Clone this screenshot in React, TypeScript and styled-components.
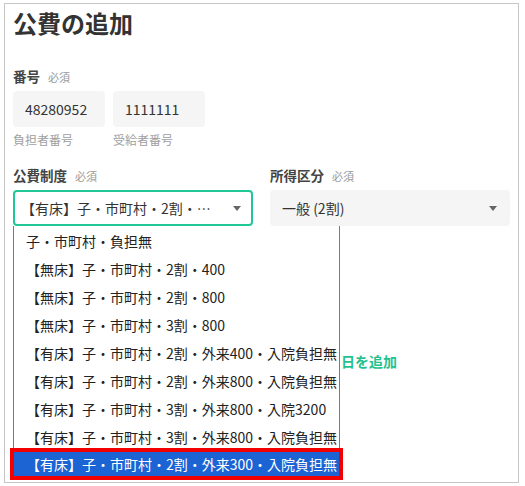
import React from 'react';
import styled, { createGlobalStyle } from 'styled-components';

const GlobalStyle = createGlobalStyle`
  body {
    margin: 0;
    font-family: "Noto Sans CJK JP", "Noto Sans", sans-serif;
    color: #333;
    background: #fff;
  }
`;

const Page = styled.div`
  padding: 3px 0 0 4px;
`;

const Panel = styled.div`
  width: 515px;
  height: 480px;
  box-sizing: border-box;
  border: 1px solid #c6c6c6;
  padding: 0 8px;
`;

const Title = styled.h1`
  margin: 2px 0 0;
  font-size: 24px;
  line-height: 34px;
  font-weight: 700;
  color: #333;
`;

const Label = styled.div<{ $top: number }>`
  margin-top: ${(p) => p.$top}px;
  display: flex;
  align-items: baseline;
  font-size: 13.5px;
  line-height: 20px;
  font-weight: 700;
  color: #444;
`;

const Required = styled.span`
  margin-left: 8px;
  font-size: 11px;
  font-weight: 400;
  color: #999;
`;

const NumberRow = styled.div`
  display: flex;
  gap: 8px;
  margin-top: 4px;
`;

const NumberField = styled.div`
  display: flex;
  flex-direction: column;
`;

const NumberInput = styled.input`
  width: 92px;
  height: 36px;
  box-sizing: border-box;
  padding: 0 12px;
  border: none;
  border-radius: 4px;
  background: #f5f5f5;
  font: inherit;
  font-size: 14px;
  color: #333;
  outline: none;
`;

const Helper = styled.div`
  margin-top: 5px;
  font-size: 12px;
  line-height: 16px;
  color: #9e9e9e;
`;

const Grid = styled.div`
  display: grid;
  grid-template-columns: 240px 240px;
  column-gap: 17px;
`;

const Field = styled.div`
  position: relative;
`;

const SelectBox = styled.div<{ $active?: boolean }>`
  margin-top: 4px;
  height: 36px;
  box-sizing: border-box;
  display: flex;
  align-items: center;
  gap: 18px;
  padding: ${(p) => (p.$active ? '0 10px 0 6px' : '0 13px 0 12px')};
  border: ${(p) => (p.$active ? '2px solid #1fc896' : 'none')};
  border-radius: 4px;
  background: ${(p) => (p.$active ? '#fff' : '#f5f5f5')};
  font-size: 14px;
  color: #333;
`;

const SelectValue = styled.span`
  flex: 1;
  min-width: 0;
  white-space: nowrap;
  overflow: hidden;
  text-overflow: ellipsis;
`;

const Caret = styled.span`
  width: 0;
  height: 0;
  border-left: 4.5px solid transparent;
  border-right: 4.5px solid transparent;
  border-top: 5px solid #666;
  flex-shrink: 0;
`;

const OptionList = styled.ul`
  position: absolute;
  top: 100%;
  left: 0;
  z-index: 10;
  width: max-content;
  margin: 0;
  padding: 1px 0 2px;
  list-style: none;
  background: #fff;
  border: 1px solid #7a7a7a;
  border-top: none;
`;

const OptionItem = styled.li<{ $selected?: boolean }>`
  height: ${(p) => (p.$selected ? '24px' : '28px')};
  margin-top: ${(p) => (p.$selected ? '1px' : '0')};
  padding: 0 2px 0 12px;
  font-size: 14px;
  line-height: ${(p) => (p.$selected ? '25px' : '28px')};
  white-space: nowrap;
  color: ${(p) => (p.$selected ? '#fff' : '#222')};
  background: ${(p) => (p.$selected ? '#1c63d3' : 'transparent')};
  outline: ${(p) => (p.$selected ? '4px solid #f20000' : 'none')};
`;

const AddLink = styled.button`
  grid-column: 2;
  justify-self: start;
  margin-top: 125px;
  display: flex;
  align-items: center;
  gap: 3px;
  padding: 0;
  border: none;
  background: none;
  font: inherit;
  font-size: 14px;
  line-height: 20px;
  font-weight: 700;
  color: #1fc28f;
  cursor: pointer;
`;

const options = [
  '子・市町村・負担無',
  '【無床】子・市町村・2割・400',
  '【無床】子・市町村・2割・800',
  '【無床】子・市町村・3割・800',
  '【有床】子・市町村・2割・外来400・入院負担無',
  '【有床】子・市町村・2割・外来800・入院負担無',
  '【有床】子・市町村・3割・外来800・入院3200',
  '【有床】子・市町村・3割・外来800・入院負担無',
  '【有床】子・市町村・2割・外来300・入院負担無',
];

const selectedIndex = 8;

export default function App() {
  return (
    <Page>
      <GlobalStyle />
      <Panel>
        <Title>公費の追加</Title>

        <Label $top={26}>
          番号<Required>必須</Required>
        </Label>
        <NumberRow>
          <NumberField>
            <NumberInput readOnly value="48280952" />
            <Helper>負担者番号</Helper>
          </NumberField>
          <NumberField>
            <NumberInput readOnly value="1111111" />
            <Helper>受給者番号</Helper>
          </NumberField>
        </NumberRow>

        <Grid>
          <Field>
            <Label $top={17}>
              公費制度<Required>必須</Required>
            </Label>
            <SelectBox $active>
              <SelectValue>{options[selectedIndex]}</SelectValue>
              <Caret />
            </SelectBox>
            <OptionList>
              {options.map((o, i) => (
                <OptionItem key={o} $selected={i === selectedIndex}>
                  {o}
                </OptionItem>
              ))}
            </OptionList>
          </Field>
          <Field>
            <Label $top={17}>
              所得区分<Required>必須</Required>
            </Label>
            <SelectBox>
              <SelectValue>一般 (2割)</SelectValue>
              <Caret />
            </SelectBox>
          </Field>
          <AddLink>
            <svg width="12" height="12" viewBox="0 0 12 12">
              <path d="M6 1v10M1 6h10" stroke="currentColor" strokeWidth="2" />
            </svg>
            終了年月日を追加
          </AddLink>
        </Grid>
      </Panel>
    </Page>
  );
}
